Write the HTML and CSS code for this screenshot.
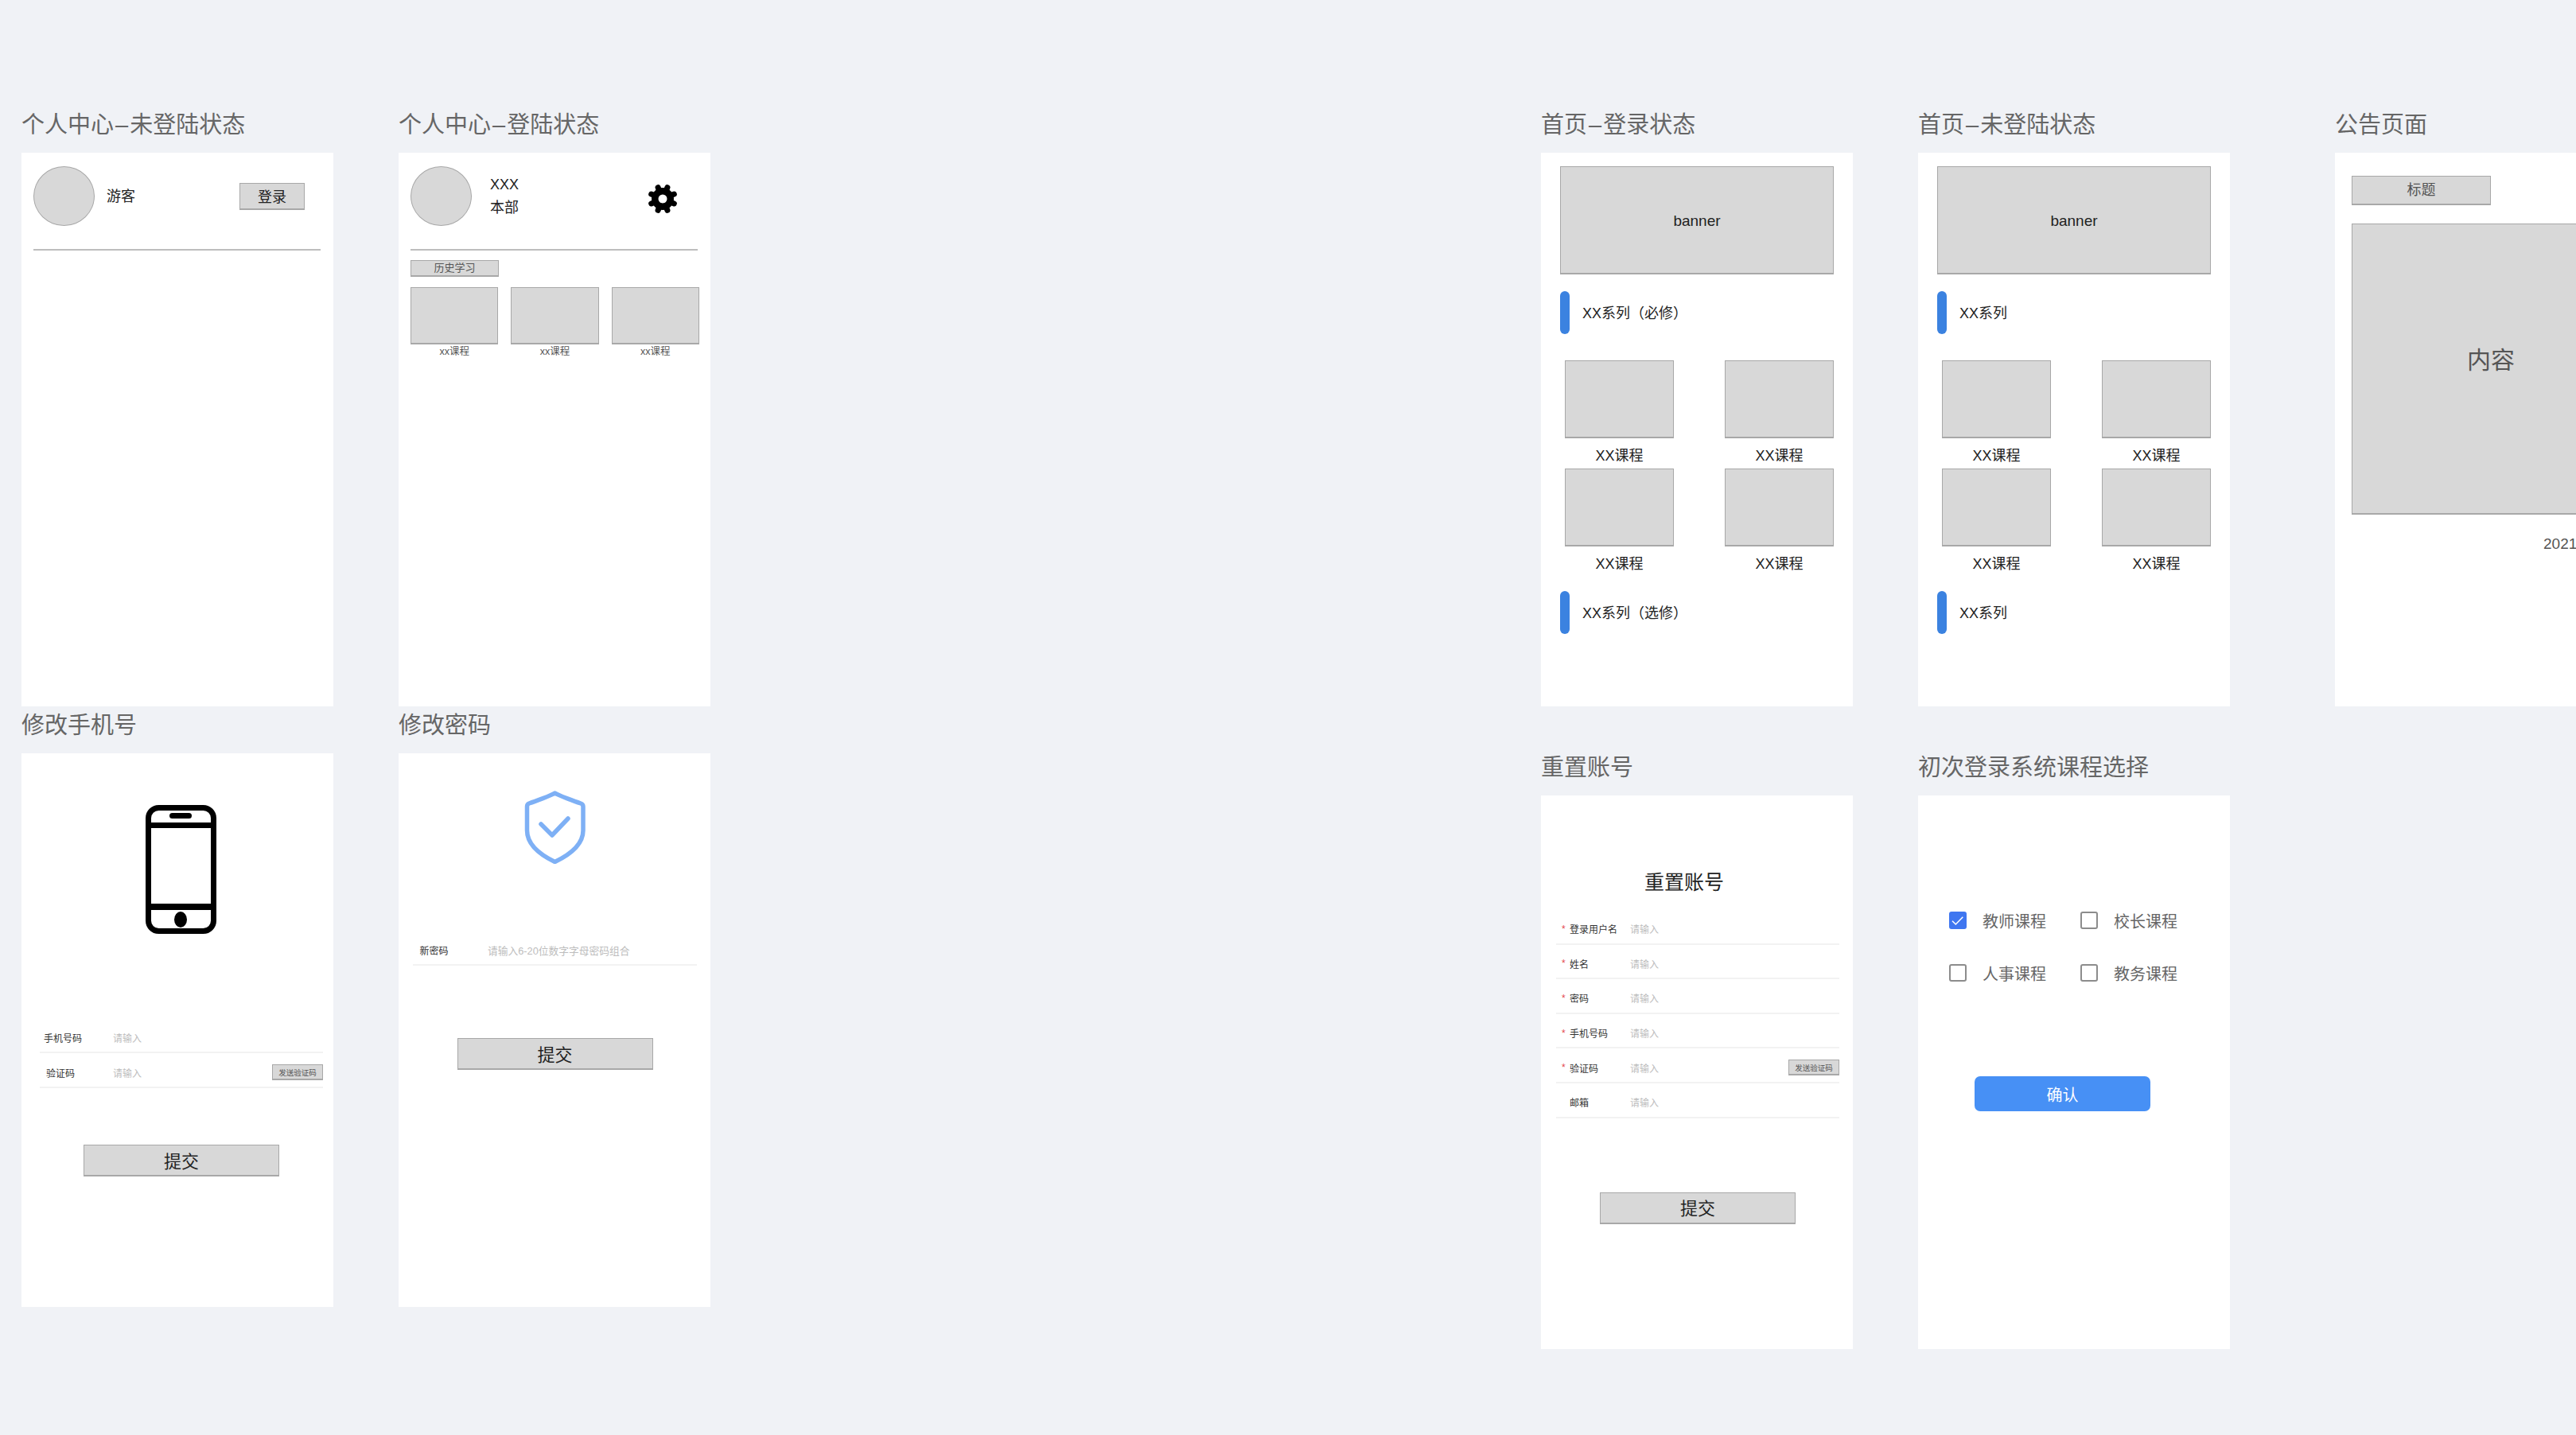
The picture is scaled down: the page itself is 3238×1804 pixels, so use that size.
FILE: index.html
```html
<!DOCTYPE html>
<html lang="zh-CN">
<head>
  <meta charset="UTF-8">
  <title>原型图</title>
  <link rel="stylesheet" href="styles.css">
</head>
<body>
  <div class="canvas">

    <!-- 个人中心 -->
    <section class="artboard at-guest">
      <h2 class="artboard-title">个人中心<span class="dash">–</span>未登陆状态</h2>
      <div class="screen profile">
        <div class="profile-head">
          <div class="avatar"></div>
          <div class="profile-name guest-name">游客</div>
          <button class="ph login-btn">登录</button>
        </div>
        <div class="divider"></div>
      </div>
    </section>

    <section class="artboard at-user">
      <h2 class="artboard-title">个人中心<span class="dash">–</span>登陆状态</h2>
      <div class="screen profile">
        <div class="profile-head">
          <div class="avatar"></div>
          <div class="profile-name user-name">
            <div>XXX</div>
            <div>本部</div>
          </div>
          <svg class="gear" viewBox="0 0 38 38" width="38" height="38">
            <line x1="19" y1="3.5" x2="19" y2="34.5" stroke="#000" stroke-width="7" stroke-linecap="round" transform="rotate(22.5 19 19)"/>
            <line x1="19" y1="3.5" x2="19" y2="34.5" stroke="#000" stroke-width="7" stroke-linecap="round" transform="rotate(67.5 19 19)"/>
            <line x1="19" y1="3.5" x2="19" y2="34.5" stroke="#000" stroke-width="7" stroke-linecap="round" transform="rotate(112.5 19 19)"/>
            <line x1="19" y1="3.5" x2="19" y2="34.5" stroke="#000" stroke-width="7" stroke-linecap="round" transform="rotate(157.5 19 19)"/>
            <circle cx="19" cy="19" r="14" fill="#000"/>
            <circle cx="19" cy="19" r="5.5" fill="#fff"/>
          </svg>
        </div>
        <div class="divider"></div>
        <div class="ph history-tag">历史学习</div>
        <div class="history-grid">
          <div class="history-item"><div class="ph history-thumb"></div><div class="history-label">xx课程</div></div>
          <div class="history-item"><div class="ph history-thumb"></div><div class="history-label">xx课程</div></div>
          <div class="history-item"><div class="ph history-thumb"></div><div class="history-label">xx课程</div></div>
        </div>
      </div>
    </section>

    <!-- 修改手机号 / 密码 -->
    <section class="artboard at-phone">
      <h2 class="artboard-title">修改手机号</h2>
      <div class="screen form-screen phone-screen">
        <svg class="phone-icon" viewBox="0 0 89 162" width="89" height="162">
          <rect x="3.5" y="3.5" width="82" height="155" rx="13" fill="none" stroke="#000" stroke-width="7"/>
          <line x1="3" y1="25.5" x2="86" y2="25.5" stroke="#000" stroke-width="7"/>
          <line x1="3" y1="128" x2="86" y2="128" stroke="#000" stroke-width="8"/>
          <rect x="30" y="10" width="28" height="7" rx="3.5" fill="#000"/>
          <ellipse cx="44" cy="144" rx="8" ry="10" fill="#000"/>
        </svg>
        <div class="field-list phone-fields">
          <div class="field">
            <span class="field-label">手机号码</span>
            <span class="field-input">请输入</span>
          </div>
          <div class="field">
            <span class="field-label short-label">验证码</span>
            <span class="field-input">请输入</span>
            <button class="ph code-btn">发送验证码</button>
          </div>
        </div>
        <button class="ph submit-btn phone-submit">提交</button>
      </div>
    </section>

    <section class="artboard at-password">
      <h2 class="artboard-title">修改密码</h2>
      <div class="screen form-screen password-screen">
        <svg class="shield-icon" viewBox="0 0 77 92" width="77" height="92">
          <path d="M38.5 3C34 6 12 14 6 16Q3.5 17 3.5 20V50C3.5 70 25 83 38.5 89.5C52 83 74 70 74 50V20Q74 17 71 16C65 14 43 6 38.5 3Z" fill="none" stroke="#7eb0f5" stroke-width="5.5" stroke-linejoin="round"/>
          <path d="M21 42L35 56L55 35" fill="none" stroke="#7eb0f5" stroke-width="5.5" stroke-linecap="round" stroke-linejoin="round"/>
        </svg>
        <div class="field-list password-fields">
          <div class="field">
            <span class="field-label password-label">新密码</span>
            <span class="field-input password-input">请输入6-20位数字字母密码组合</span>
          </div>
        </div>
        <button class="ph submit-btn password-submit">提交</button>
      </div>
    </section>

    <!-- 首页 -->
    <section class="artboard at-home-user">
      <h2 class="artboard-title">首页<span class="dash">–</span>登录状态</h2>
      <div class="screen home">
        <div class="ph banner">banner</div>
        <div class="series"><i class="series-bar"></i><span class="series-text">XX系列（必修）</span></div>
        <div class="course-grid">
          <div><div class="ph course-thumb"></div><div class="course-label">XX课程</div></div>
          <div><div class="ph course-thumb"></div><div class="course-label">XX课程</div></div>
          <div><div class="ph course-thumb"></div><div class="course-label">XX课程</div></div>
          <div><div class="ph course-thumb"></div><div class="course-label">XX课程</div></div>
        </div>
        <div class="series series-next"><i class="series-bar"></i><span class="series-text">XX系列（选修）</span></div>
      </div>
    </section>

    <section class="artboard at-home-guest">
      <h2 class="artboard-title">首页<span class="dash">–</span>未登陆状态</h2>
      <div class="screen home">
        <div class="ph banner">banner</div>
        <div class="series"><i class="series-bar"></i><span class="series-text">XX系列</span></div>
        <div class="course-grid">
          <div><div class="ph course-thumb"></div><div class="course-label">XX课程</div></div>
          <div><div class="ph course-thumb"></div><div class="course-label">XX课程</div></div>
          <div><div class="ph course-thumb"></div><div class="course-label">XX课程</div></div>
          <div><div class="ph course-thumb"></div><div class="course-label">XX课程</div></div>
        </div>
        <div class="series series-next"><i class="series-bar"></i><span class="series-text">XX系列</span></div>
      </div>
    </section>

    <!-- 公告 -->
    <section class="artboard at-notice">
      <h2 class="artboard-title">公告页面</h2>
      <div class="screen notice">
        <div class="ph notice-title">标题</div>
        <div class="ph notice-body">内容</div>
        <div class="notice-date">2021</div>
      </div>
    </section>

    <!-- 重置账号 -->
    <section class="artboard at-reset">
      <h2 class="artboard-title">重置账号</h2>
      <div class="screen form-screen reset-screen">
        <h3 class="reset-heading">重置账号</h3>
        <div class="field-list reset-fields">
          <div class="field"><span class="req">*</span><span class="field-label reset-label">登录用户名</span><span class="field-input">请输入</span></div>
          <div class="field"><span class="req">*</span><span class="field-label reset-label">姓名</span><span class="field-input">请输入</span></div>
          <div class="field"><span class="req">*</span><span class="field-label reset-label">密码</span><span class="field-input">请输入</span></div>
          <div class="field"><span class="req">*</span><span class="field-label reset-label">手机号码</span><span class="field-input">请输入</span></div>
          <div class="field"><span class="req">*</span><span class="field-label reset-label">验证码</span><span class="field-input">请输入</span><button class="ph code-btn">发送验证码</button></div>
          <div class="field"><span class="req"></span><span class="field-label reset-label">邮箱</span><span class="field-input">请输入</span></div>
        </div>
        <button class="ph submit-btn reset-submit">提交</button>
      </div>
    </section>

    <!-- 课程选择 -->
    <section class="artboard at-choose">
      <h2 class="artboard-title">初次登录系统课程选择</h2>
      <div class="screen choose">
        <div class="option-grid">
          <div class="option">
            <span class="check checked">
              <svg viewBox="0 0 22 22" width="22" height="22"><path d="M4 11.7L8.3 16L17.3 6.7" fill="none" stroke="#fff" stroke-width="1.5"/></svg>
            </span>
            教师课程
          </div>
          <div class="option"><span class="check"></span>校长课程</div>
          <div class="option"><span class="check"></span>人事课程</div>
          <div class="option"><span class="check"></span>教务课程</div>
        </div>
        <button class="confirm-btn">确认</button>
      </div>
    </section>

  </div>
</body>
</html>
```

FILE: styles.css
```css
* {
  box-sizing: border-box;
}

html, body {
  margin: 0;
  padding: 0;
  height: 100%;
  overflow: hidden;
}

body {
  background-color: #f0f2f6;
  font-family: "Liberation Sans", "Noto Sans CJK SC", sans-serif;
  color: #222;
}

button {
  font-family: inherit;
  padding: 0;
}

.canvas {
  position: relative;
  width: 3238px;
  height: 1804px;
  overflow: hidden;
}

/* artboards sit on a free canvas */
.artboard {
  position: absolute;
  width: 392px;
}

.at-guest { left: 27px; top: 136px; }
.at-user { left: 501px; top: 136px; }
.at-phone { left: 27px; top: 891px; }
.at-password { left: 501px; top: 891px; }
.at-home-user { left: 1937px; top: 136px; }
.at-home-guest { left: 2411px; top: 136px; }
.at-notice { left: 2935px; top: 136px; }
.at-reset { left: 1937px; top: 944px; }
.at-choose { left: 2411px; top: 944px; }

.artboard-title {
  margin: 0 0 16px;
  height: 40px;
  line-height: 42px;
  font-size: 29px;
  font-weight: 400;
  color: #666;
  white-space: nowrap;
}

.dash {
  margin: 0 2px;
}

.screen {
  height: 696px;
  background: #fff;
}

.ph {
  background: #d8d8d8;
  border: 1px solid #a8a8a8;
  border-bottom-width: 2px;
}

/* profile */
.profile {
  padding: 17px 16px 0 15px;
}

.profile-head {
  display: flex;
  align-items: center;
  height: 75px;
}

.avatar {
  width: 77px;
  height: 75px;
  border-radius: 50%;
  background: #d8d8d8;
  border: 1px solid #a8a8a8;
}

.profile-name {
  font-size: 18px;
  color: #222;
}

.guest-name {
  margin-left: 15px;
  padding-bottom: 4px;
}

.user-name {
  margin-left: 23px;
  line-height: 29px;
}

.login-btn {
  margin-left: auto;
  margin-right: 20px;
  width: 82px;
  height: 34px;
  font-size: 18px;
  color: #222;
}

.gear {
  margin-left: auto;
  margin-right: 25px;
  margin-top: 7px;
}

.divider {
  margin-top: 29px;
  height: 2px;
  background: #bdbdbd;
}

.history-tag {
  margin-top: 12px;
  width: 111px;
  height: 21px;
  line-height: 18px;
  text-align: center;
  font-size: 13px;
  color: #555;
}

.history-grid {
  display: grid;
  grid-template-columns: repeat(3, 1fr);
  gap: 16px;
  margin-top: 13px;
  margin-right: -2px;
}

.history-thumb {
  height: 72px;
}

.history-label {
  line-height: 18px;
  text-align: center;
  font-size: 12.5px;
  color: #555;
}

/* forms */
.form-screen {
  padding-left: 23px;
  padding-right: 13px;
}

.phone-screen {
  padding-top: 65px;
}

.phone-icon {
  display: block;
  margin-left: 133px;
}

.phone-fields {
  margin-top: 106px;
}

.field {
  display: flex;
  align-items: center;
  height: 44px;
  padding-top: 6px;
  border-bottom: 2px solid #f2f2f2;
  font-size: 12px;
}

.field-label {
  flex: none;
  width: 92px;
  padding-left: 5px;
  color: #333;
}

.short-label {
  padding-left: 8px;
}

.field-input {
  color: #bdbdbd;
  white-space: nowrap;
}

.code-btn {
  margin-left: auto;
  width: 64px;
  height: 20px;
  font-size: 9.5px;
  color: #555;
  white-space: nowrap;
}

.submit-btn {
  display: block;
  margin-left: auto;
  margin-right: auto;
  width: 246px;
  height: 40px;
  padding-bottom: 2px;
  font-size: 22px;
  color: #222;
}

.phone-submit {
  margin-top: 71px;
}

.password-screen {
  padding: 47px 17px 0 18px;
}

.shield-icon {
  display: block;
  margin-left: 140px;
}

.password-fields {
  margin-top: 84px;
}

.password-label {
  width: 94px;
  padding-left: 8.5px;
}

.password-input {
  font-size: 12.75px;
}

.password-submit {
  margin-top: 91px;
}

/* home */
.home {
  padding: 17px 24px 0;
}

.banner {
  display: flex;
  align-items: center;
  justify-content: center;
  height: 136px;
  padding-top: 3px;
  font-size: 19px;
  color: #222;
}

.series {
  display: flex;
  align-items: center;
  gap: 16px;
  margin-top: 21px;
  height: 54px;
  font-size: 18px;
  color: #222;
}

.series-next {
  margin-top: 18px;
}

.series-bar {
  width: 12px;
  height: 54px;
  border-radius: 6px;
  background: #3b82e0;
}

.series-text {
  margin-bottom: 3px;
}

.course-grid {
  display: grid;
  grid-template-columns: 137px 137px;
  column-gap: 64px;
  margin-top: 33px;
  margin-left: 6px;
}

.course-thumb {
  height: 98px;
}

.course-label {
  height: 38px;
  line-height: 44px;
  text-align: center;
  font-size: 18px;
  color: #222;
}

/* notice */
.notice {
  padding: 29px 21px 0;
}

.notice-title {
  width: 175px;
  height: 37px;
  line-height: 34px;
  text-align: center;
  font-size: 18px;
  color: #555;
}

.notice-body {
  display: flex;
  align-items: center;
  justify-content: center;
  margin-top: 23px;
  width: 350px;
  height: 366px;
  padding-bottom: 28px;
  font-size: 30px;
  color: #555;
}

.notice-date {
  margin-top: 25px;
  margin-left: 241px;
  line-height: 24px;
  font-size: 19px;
  color: #555;
}

/* reset */
.reset-screen {
  padding: 92px 17px 0 19px;
}

.reset-heading {
  margin: 0 0 18px;
  padding-right: 34px;
  line-height: 34px;
  text-align: center;
  font-size: 25px;
  font-weight: 400;
  color: #222;
}

.reset-fields .field {
  height: 43.6px;
  padding-top: 6px;
}

.req {
  flex: none;
  width: 10px;
  margin-left: 7px;
  color: #e5484d;
}

.reset-label {
  width: 76px;
  padding-left: 0;
}

.reset-submit {
  margin-top: 93px;
}

/* course choice */
.choose {
  padding: 146px 0 0 39px;
}

.option-grid {
  display: grid;
  grid-template-columns: 165px 165px;
  row-gap: 44px;
}

.option {
  display: flex;
  align-items: center;
  gap: 20px;
  height: 22px;
  font-size: 20px;
  color: #666;
}

.check {
  flex: none;
  width: 22px;
  height: 22px;
  border: 2px solid #8c8c8c;
  border-radius: 3px;
}

.check.checked {
  border: none;
  background: #3f76f0;
}

.check svg {
  display: block;
}

.confirm-btn {
  display: block;
  margin-top: 119px;
  margin-left: 32px;
  width: 221px;
  height: 44px;
  border: none;
  border-radius: 7px;
  background: #4790f5;
  color: #fff;
  font-size: 20px;
}
```
